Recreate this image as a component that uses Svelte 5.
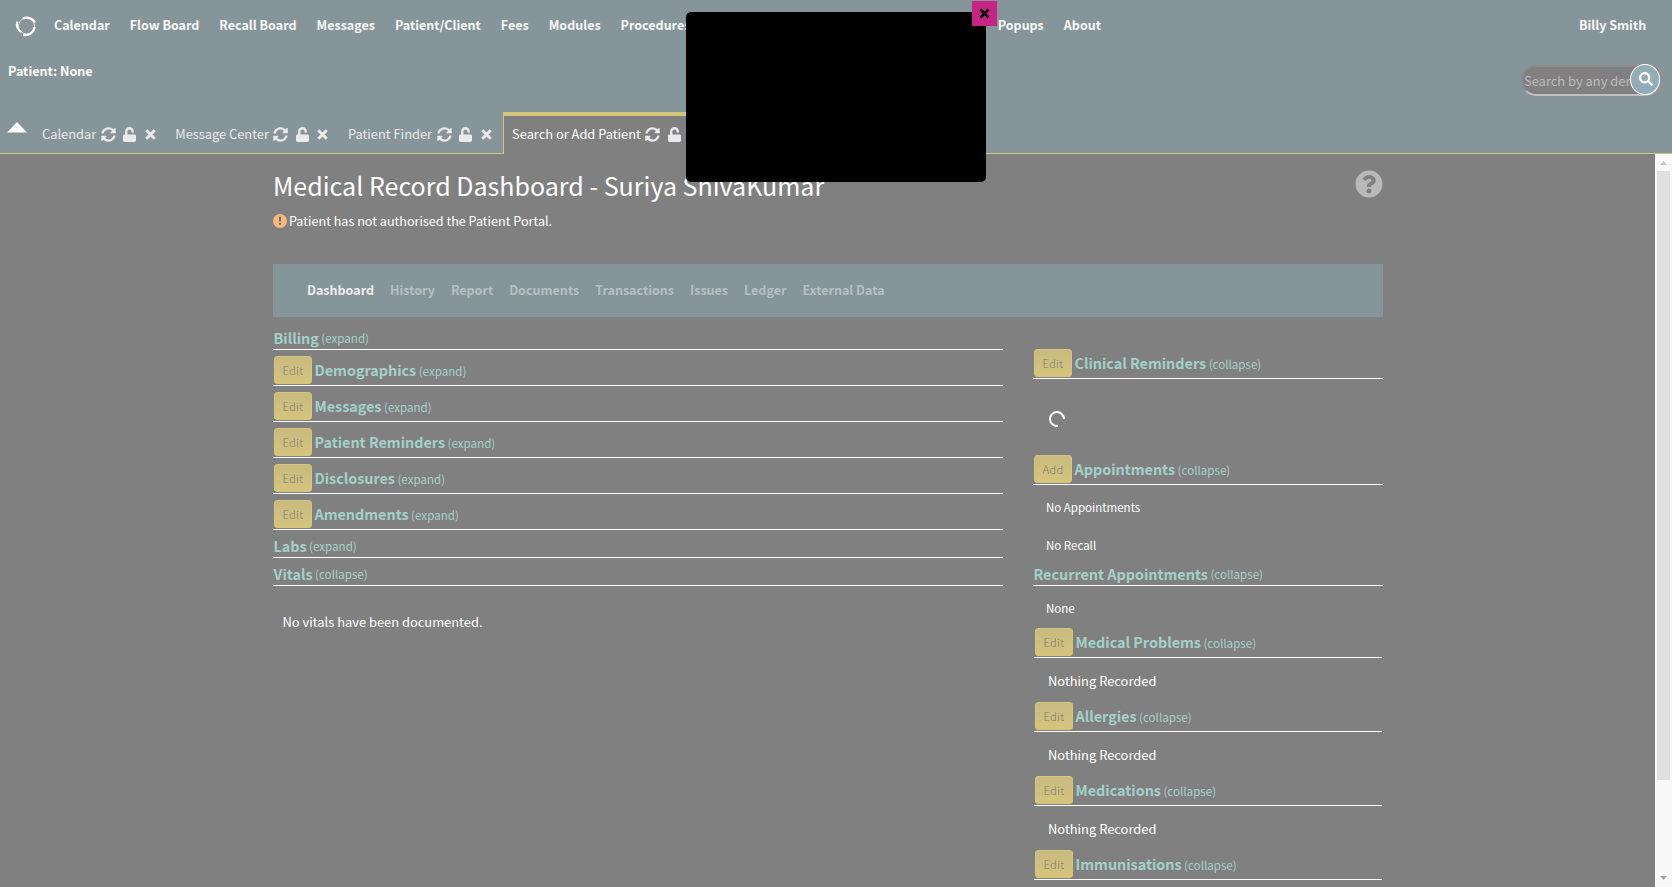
<script>
  const menu = ['Calendar', 'Flow Board', 'Recall Board', 'Messages', 'Patient/Client', 'Fees', 'Modules', 'Procedures'];
  const tabs = [
    { name: 'Calendar' },
    { name: 'Message Center' },
    { name: 'Patient Finder' },
    { name: 'Search or Add Patient', active: true }
  ];
  const sections = ['Dashboard', 'History', 'Report', 'Documents', 'Transactions', 'Issues', 'Ledger', 'External Data'];
  const left = [
    { title: 'Billing', state: 'expand' },
    { title: 'Demographics', state: 'expand', button: 'Edit' },
    { title: 'Messages', state: 'expand', button: 'Edit' },
    { title: 'Patient Reminders', state: 'expand', button: 'Edit' },
    { title: 'Disclosures', state: 'expand', button: 'Edit' },
    { title: 'Amendments', state: 'expand', button: 'Edit' },
    { title: 'Labs', state: 'expand' },
    { title: 'Vitals', state: 'collapse' }
  ];
  const lists = ['Medical Problems', 'Allergies', 'Medications', 'Immunisations'];
</script>

{#snippet head(title, state, button)}
  <div class="head" class:tall={button}>
    {#if button}<button class="edit">{button}</button>{/if}
    <b>{title}</b><span>({state})</span>
  </div>
{/snippet}

<div class="app">
  <header>
    <nav class="menu">
      <svg class="logo" width="22" height="22" viewBox="0 0 22 22" fill="none" stroke="#fff">
        <circle cx="11.500" cy="11" r="8" stroke-width=".7" />
        <path d="M8 3.600A9 9 0 0 1 20 7.500" stroke-width="2.200" />
        <path d="M6.500 17A8.600 8.600 0 0 1 2.300 6.500" stroke-width="2" />
        <path d="M19.500 12A9 9 0 0 1 8 19.800" stroke-width="2.300" />
      </svg>
      {#each menu as item}<a>{item}</a>{/each}
      <span class="rest"><a>Popups</a><a>About</a></span>
      <a class="user">Billy Smith</a>
    </nav>
    <div class="patient">
      <b>Patient: None</b>
      <div class="search">
        <span>Search by any dem</span>
        <i><svg width="14" height="14" viewBox="0 0 512 512" fill="#fff"><path d="M505 442.700L405.300 343c-4.500-4.500-10.600-7-17-7H372c27.600-35.300 44-79.700 44-128C416 93.100 322.900 0 208 0S0 93.100 0 208s93.100 208 208 208c48.300 0 92.700-16.400 128-44v16.300c0 6.400 2.500 12.500 7 17l99.700 99.700c9.400 9.400 24.600 9.400 33.900 0l28.300-28.300c9.400-9.400 9.400-24.600.1-34zM208 336c-70.700 0-128-57.200-128-128 0-70.700 57.200-128 128-128 70.700 0 128 57.200 128 128 0 70.700-57.200 128-128 128z" /></svg></i>
      </div>
    </div>
    <div class="tabs">
      <svg class="up" width="20" height="11" viewBox="0 0 20 11"><path d="M10 0L20 10.500H0z" fill="#fff" /></svg>
      {#each tabs as tab}
        <div class="tab" class:active={tab.active}>
          <span>{tab.name}</span>
          <svg class="sync" width="15" height="15" viewBox="0 0 512 512"><path d="M370.720 133.280C339.458 104.008 298.888 87.962 255.848 88c-77.458.068-144.328 53.178-162.791 126.850-1.344 5.363-6.122 9.150-11.651 9.150H24.103c-7.498 0-13.194-6.807-11.807-14.176C33.933 94.924 134.813 8 256 8c66.448 0 126.791 26.136 171.315 68.685L463.030 40.970C478.149 25.851 504 36.559 504 57.941V192c0 13.255-10.745 24-24 24H345.941c-21.382 0-32.090-25.851-16.971-40.971l41.750-41.749zM32 296h134.059c21.382 0 32.090 25.851 16.971 40.971l-41.750 41.750c31.262 29.273 71.835 45.319 114.876 45.280 77.418-.07 144.315-53.144 162.787-126.849 1.344-5.363 6.122-9.150 11.651-9.150h57.304c7.498 0 13.194 6.807 11.807 14.176C478.067 417.076 377.187 504 256 504c-66.448 0-126.791-26.136-171.315-68.685L48.970 471.030C33.851 486.149 8 475.441 8 454.059V320c0-13.255 10.745-24 24-24z" /></svg>
          <svg class="lock" width="13" height="15" viewBox="0 0 448 512"><path d="M400 256H152V152.900c0-39.600 31.700-72.500 71.300-72.900 40-.4 72.700 32.100 72.700 72v16c0 13.300 10.700 24 24 24h32c13.300 0 24-10.700 24-24v-16C376 68 307.500-.3 223.500 0 139.500.3 72 69.500 72 153.500V256H48c-26.500 0-48 21.500-48 48v160c0 26.500 21.500 48 48 48h352c26.500 0 48-21.500 48-48V304c0-26.500-21.500-48-48-48z" /></svg>
          <svg class="x" width="11" height="11" viewBox="0 0 10 10"><path d="M1.200 1.200l7.600 7.600M8.800 1.200L1.200 8.800" stroke="#e8eaec" stroke-width="2.700" /></svg>
        </div>
      {/each}
    </div>
  </header>

  <div class="frame">
    <main>
      <div class="top">
        <h1>Medical Record Dashboard - Suriya ShivaKumar</h1>
        <svg class="help" width="28" height="28" viewBox="0 0 512 512" fill="#b9b9b9"><path d="M504 256c0 136.997-111.043 248-248 248S8 392.997 8 256C8 119.083 119.043 8 256 8s248 111.083 248 248zM262.655 90c-54.497 0-89.255 22.957-116.549 63.758-3.536 5.286-2.353 12.415 2.715 16.258l34.699 26.310c5.205 3.947 12.621 3.008 16.665-2.122 17.864-22.658 30.113-35.797 57.303-35.797 20.429 0 45.698 13.148 45.698 32.958 0 14.976-12.363 22.667-32.534 33.976C247.128 238.528 216 254.941 216 296v4c0 6.627 5.373 12 12 12h56c6.627 0 12-5.373 12-12v-1.333c0-28.462 83.186-29.647 83.186-106.667 0-58.002-60.165-102-116.531-102zM256 338c-25.365 0-46 20.635-46 46 0 25.364 20.635 46 46 46s46-20.636 46-46c0-25.365-20.635-46-46-46z" /></svg>
      </div>
      <div class="notice">
        <svg width="14" height="14" viewBox="0 0 14 14"><circle cx="7" cy="7" r="7" fill="#f6ba7c" /><path d="M5.900 2.800h2.200l-.3 5H6.200zM6 8.700h2v2H6z" fill="#77706a" /></svg>
        <span>Patient has not authorised the Patient Portal.</span>
      </div>
      <nav class="sections">
        {#each sections as s, i}<a class:on={i === 0}>{s}</a>{/each}
      </nav>
      <div class="cols">
        <section class="left">
          {#each left as r}{@render head(r.title, r.state, r.button)}{/each}
          <p class="vitals">No vitals have been documented.</p>
        </section>
        <section class="right">
          {@render head('Clinical Reminders', 'collapse', 'Edit')}
          <div class="loading">
            <svg width="16" height="16" viewBox="0 0 16 16" fill="none" stroke="#fff" stroke-width="2"><path d="M15 8A7 7 0 1 0 9 15" /></svg>
          </div>
          {@render head('Appointments', 'collapse', 'Add')}
          <p class="small">No Appointments</p>
          <p class="small">No Recall</p>
          {@render head('Recurrent Appointments', 'collapse')}
          <p class="small none">None</p>
          <div class="lists">
            {#each lists as l, i}
              {@render head(l, 'collapse', 'Edit')}
              {#if i < lists.length - 1}<p>Nothing Recorded</p>{/if}
            {/each}
          </div>
        </section>
      </div>
    </main>
    <div class="scroll">
      <svg width="7" height="4" viewBox="0 0 7 4"><path d="M3.500 0L7 4H0z" fill="#c6c6c6" /></svg>
      <div class="thumb"></div>
      <svg width="7" height="4" viewBox="0 0 7 4"><path d="M0 0h7L3.500 4z" fill="#a0a0a0" /></svg>
    </div>
  </div>

  <div class="dialog">
    <button class="close"><svg width="11" height="11" viewBox="0 0 11 11"><path d="M1.500 1.500l8 8M9.500 1.500l-8 8" stroke="#000" stroke-width="2.500" /></svg></button>
  </div>
</div>

<style>
  :global(body) { background: #808080; overflow: hidden; }
  .app {
    width: 1672px; height: 887px; overflow: hidden; position: relative; box-sizing: border-box;
    display: flex; flex-direction: column; background: #808080; color: #fff;
    font: 12.6px/20px "Noto Sans CJK SC", sans-serif; white-space: nowrap;
  }
  p, h1 { margin: 0; font-weight: 400; }
  svg { display: block; flex: none; }
  header { height: 154px; box-sizing: border-box; background: #869599; display: flex; flex-direction: column; flex: none; }
  .menu { height: 50px; display: flex; align-items: center; padding-left: 15px; font-size: 12.530px; font-weight: 700; color: #f7f8f8; gap: 20px; }
  .logo { margin: 2px -3px 0 0; }
  .rest { display: flex; gap: 20px; margin-left: auto; }
  .user { width: 67px; margin: 0 26px 0 458px; }
  .patient { height: 62px; display: flex; justify-content: space-between; padding: 0 12px 0 8px; }
  .patient b { margin-top: 11px; }
  .search {
    width: 139px; height: 31px; box-sizing: border-box; margin-top: 15px; border: 2px solid; border-color: #8b8b8b #b5b5b5 #c0c0c0 #8b8b8b;
    border-radius: 15px; background: #808080; display: flex; justify-content: space-between; align-items: center;
  }
  .search span { width: 106px; margin-left: 1px; font-size: 12.900px; color: #bcbcbc; flex: none; }
  .search i { width: 30px; height: 31px; box-sizing: border-box; border: 1px solid #fff; border-radius: 50%; background: #92adb8; margin: -2px -2px 0 0; display: grid; place-items: center; flex: none; z-index: 1; }
  .search svg { margin: -2px 0 0 2px; }
  .tabs { height: 42px; display: flex; box-sizing: border-box; background: linear-gradient(#d5c47b, #d5c47b) bottom / 100% 1px no-repeat; }
  .up { margin: 10px 7px 0 7px; }
  .tab { box-sizing: border-box; display: flex; align-items: center; padding: 2px 11.500px 0 8px; color: #e8eaec; height: 42px; flex: none; font-size: 12.850px; }
  .tab span { margin-right: 4.500px; }
  .tab svg { fill: #e8eaec; }
  .sync { margin-right: 7.500px; }
  .lock { margin-right: 8.500px; }
  .active { background: #808080; border-top: 4px solid #d5c47b; border-left: 1px solid #d5c47b; padding-top: 0; padding-bottom: 2px; color: #fff; }
  .frame { flex: 1; display: flex; justify-content: space-between; min-height: 0; }
  main { margin-left: 273px; width: 1110px; display: flex; flex-direction: column; }
  .top { display: flex; justify-content: space-between; height: 56px; flex: none; }
  h1 { font-size: 25.040px; line-height: 36px; margin-top: 13px; }
  .help { margin: 16px 0 0 0; }
  .notice { display: flex; gap: 2px; height: 54px; flex: none; }
  .notice svg { margin-top: 4px; }
  .notice span { margin-top: 1px; }
  .sections { height: 53px; box-sizing: border-box; display: flex; align-items: center; gap: 16px; padding: 0 0 2px 34px; background: #869599; color: #b6bfc2; font-size: 12.530px; font-weight: 700; flex: none; }
  .on { color: #eceeef; }
  .cols { display: flex; justify-content: space-between; flex: none; }
  .left { width: 730px; padding-top: 5px; }
  .right { width: 350px; padding-top: 26px; }
  .head { height: 28px; box-sizing: border-box; border-bottom: 1px solid #fff; display: flex; align-items: flex-end; color: #a3d0c8; padding-left: .5px; }
  .tall { height: 36px; padding-left: 1px; }
  .head b { font-size: 14.350px; line-height: 21px; margin-bottom: 1px; }
  .head span { font-size: 11.600px; line-height: 19px; margin: 0 0 1px 2.500px; }
  .tall b { line-height: 24px; margin-bottom: 3px; }
  .tall span { line-height: 22px; margin-bottom: 3px; }
  .edit {
    width: 38px; height: 28px; box-sizing: border-box; border: 1px solid #d5c47b; border-radius: 3px; padding: 0; margin: 0 2.500px 1px 0;
    background: linear-gradient(#c9ba80, #d5c47b); color: #7c7c7c; font: 300 11.200px/24px "Noto Sans CJK SC", sans-serif; letter-spacing: .3px;
  }
  .vitals { margin: 26px 0 0 9.500px; font-size: 12.900px; }
  .loading { height: 70px; padding: 32px 0 0 16px; box-sizing: border-box; }
  .small { font-size: 11.500px; margin: 12px 0 0 13px; height: 26px; }
  .small + :global(.head) { margin-top: -3px; }
  .none { height: 22px; margin-top: 12px; }
  .lists { padding: 2px 1px 0; }
  .lists p { height: 25px; margin: 13px 0 0 14px; font-size: 12.900px; }
  .scroll { width: 17px; background: #f9f9f9; display: flex; flex-direction: column; align-items: center; padding: 7px 0 7px; box-sizing: border-box; }
  .thumb { width: 13px; height: 609px; background: #e0e0e0; margin: 6px 0 auto; }
  .dialog { position: absolute; left: 686px; top: 12px; width: 300px; height: 170px; background: #000; border-radius: 5px; }
  .close { position: absolute; left: 286px; top: -11px; width: 25px; height: 25px; border: 0; padding: 0; background: #c62586; display: grid; place-items: center; }
</style>
